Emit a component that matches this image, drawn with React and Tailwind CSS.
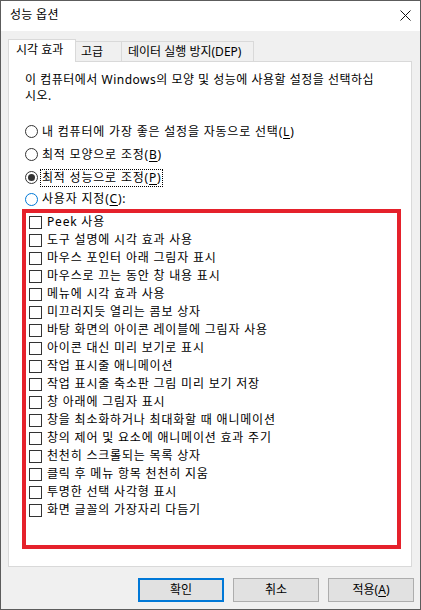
import React from "react";

const PRESETS = [
  { label: "내 컴퓨터에 가장 좋은 설정을 자동으로 선택", hotkey: "L", h: "h-[23px]" },
  { label: "최적 모양으로 조정", hotkey: "B", h: "h-[23px]" },
  { label: "최적 성능으로 조정", hotkey: "P", h: "h-[23px]", checked: true, focused: true },
  { label: "사용자 지정", hotkey: "C", suffix: ":", h: "h-[20px]", hover: true },
];

const EFFECTS = [
  "Peek 사용",
  "도구 설명에 시각 효과 사용",
  "마우스 포인터 아래 그림자 표시",
  "마우스로 끄는 동안 창 내용 표시",
  "메뉴에 시각 효과 사용",
  "미끄러지듯 열리는 콤보 상자",
  "바탕 화면의 아이콘 레이블에 그림자 사용",
  "아이콘 대신 미리 보기로 표시",
  "작업 표시줄 애니메이션",
  "작업 표시줄 축소판 그림 미리 보기 저장",
  "창 아래에 그림자 표시",
  "창을 최소화하거나 최대화할 때 애니메이션",
  "창의 제어 및 요소에 애니메이션 효과 주기",
  "천천히 스크롤되는 목록 상자",
  "클릭 후 메뉴 항목 천천히 지움",
  "투명한 선택 사각형 표시",
  "화면 글꼴의 가장자리 다듬기",
];

function Radio({ checked, hover }) {
  return (
    <span
      className={`flex h-[13px] w-[13px] shrink-0 items-center justify-center rounded-full border bg-white ${
        hover ? "border-[#0078d7]" : "border-[#333333]"
      }`}
    >
      {checked && <span className="h-[7px] w-[7px] rounded-full bg-[#333333]" />}
    </span>
  );
}

function Label({ text, hotkey, suffix }) {
  return (
    <>
      {text}({<span className="underline underline-offset-2">{hotkey}</span>}){suffix}
    </>
  );
}

function Button({ children, primary }) {
  return (
    <button
      className={`flex h-[24px] w-[86px] items-center justify-center bg-[#e1e1e1] text-[12px] text-black ${
        primary ? "border-2 border-[#0078d7]" : "border border-[#adadad]"
      }`}
    >
      {children}
    </button>
  );
}

export default function App() {
  return (
    <div className="flex h-[610px] w-[421px] flex-col border border-[#5c5c5c] bg-[#f0f0f0] font-['Noto_Sans','Noto_Sans_CJK_KR',sans-serif] text-[12px] text-black">
      {/* title bar */}
      <div className="flex h-[30px] shrink-0 items-center justify-between bg-white pl-[9px] pr-[9px]">
        <span className="pb-[2px] tracking-[0.3px]">성능 옵션</span>
        <svg width="11" height="11" viewBox="0 0 11 11" className="mb-[1px]">
          <path d="M0.5 0.5 L10.5 10.5 M10.5 0.5 L0.5 10.5" stroke="#111" strokeWidth="1" />
        </svg>
      </div>

      {/* tabs */}
      <div className="ml-[7px] mt-[8px] flex h-[22px] items-end">
        <div className="relative z-10 -mb-px flex h-[23px] w-[68px] items-center border border-b-0 border-[#d9d9d9] bg-white pb-[2px] pl-[7px]">
          시각 효과
        </div>
        <div className="-ml-px flex h-[20px] w-[47px] items-center border border-b-0 border-[#d9d9d9] pl-[5px]">
          고급
        </div>
        <div className="-ml-px flex h-[20px] w-[133px] items-center border border-b-0 border-[#d9d9d9] pl-[6px]">
          데이터 실행 방지(DEP)
        </div>
      </div>

      {/* tab page */}
      <div className="ml-[7px] flex h-[506px] w-[404px] flex-col border border-[#d9d9d9] bg-white pl-[16px] pt-[10px]">
        <p className="flex flex-col leading-[16px] tracking-[0.5px]">
          <span className="whitespace-nowrap">이 컴퓨터에서 Windows의 모양 및 성능에 사용할 설정을 선택하십</span>
          <span>시오.</span>
        </p>

        <div className="mt-[16px] flex flex-col">
          {PRESETS.map((o) => (
            <div key={o.hotkey} className={`flex ${o.h} items-center`}>
              <Radio checked={o.checked} hover={o.hover} />
              <span
                className={`ml-[2px] whitespace-nowrap px-[1px] leading-[16px] tracking-[0.8px] ${
                  o.focused ? "border border-dotted border-black" : "border border-transparent"
                }`}
              >
                <Label text={o.label} hotkey={o.hotkey} suffix={o.suffix} />
              </span>
            </div>
          ))}
        </div>

        {/* effects list */}
        <div className="-ml-[3px] h-[340px] w-[379px] border-4 border-[#e5212b] pl-[3px]">
          {EFFECTS.map((t) => (
            <div key={t} className="flex h-[18px] items-center">
              <span className="h-[13px] w-[13px] shrink-0 border border-[#333333] bg-white" />
              <span className="ml-[5px] whitespace-nowrap tracking-[0.8px]">{t}</span>
            </div>
          ))}
        </div>
      </div>

      {/* dialog buttons */}
      <div className="mt-[11px] flex justify-end gap-[9px] pr-[6px]">
        <Button primary>확인</Button>
        <Button>취소</Button>
        <Button>
          적용(<span className="underline underline-offset-2">A</span>)
        </Button>
      </div>
    </div>
  );
}
